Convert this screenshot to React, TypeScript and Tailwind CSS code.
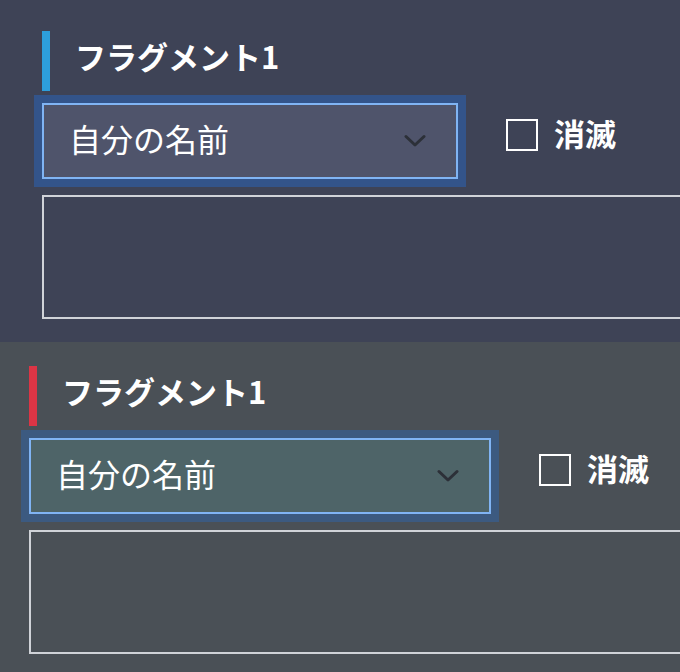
const FONT = { fontFamily: '"Noto Sans CJK JP", "Noto Sans", sans-serif' };

function Chevron() {
  return (
    <svg width="22" height="14" viewBox="0 0 22 14" fill="none">
      <path d="M2 2.5 L11 11 L20 2.5" stroke="#2c3038" strokeWidth="3" strokeLinecap="round" strokeLinejoin="round" />
    </svg>
  );
}

function Fragment({
  pad,
  selectWidth,
  sectionClass,
  barClass,
  ringClass,
  fieldClass,
}: {
  pad: string;
  selectWidth: string;
  sectionClass: string;
  barClass: string;
  ringClass: string;
  fieldClass: string;
}) {
  return (
    <section className={sectionClass}>
      <div className={pad}>
        <div className="flex items-start">
          <div className={`h-[60px] w-2 ${barClass}`} />
          <h2 className="ml-[25px] mt-[9px] text-[31px] font-bold leading-none text-white">フラグメント1</h2>
        </div>
        <div className="mt-1 flex items-start">
          <div className={`-ml-2 p-2 ${ringClass}`}>
            <div
              className={`flex h-[76px] items-center justify-between border-2 border-[#80b4f4] pl-[25px] pr-[30px] ${selectWidth} ${fieldClass}`}
            >
              <span className="mb-[6px] text-[32px] leading-none text-white">自分の名前</span>
              <Chevron />
            </div>
          </div>
          <label className="ml-10 mt-[22px] flex items-center gap-4">
            <span className="block h-8 w-8 border-2 border-white" />
            <span className="mb-1 text-[31px] font-bold leading-none text-white">消滅</span>
          </label>
        </div>
        <div className="mt-2 h-[124px] w-[720px] border-2 border-[#d0d3d8]" />
      </div>
    </section>
  );
}

export default function App() {
  return (
    <div className="h-[672px] w-[680px] overflow-hidden" style={FONT}>
      <Fragment
        pad="pl-[42px] pt-[31px] pb-[23px]"
        selectWidth="w-[416px]"
        sectionClass="bg-[#3e4356]"
        barClass="bg-[#2d9fdc]"
        ringClass="bg-[#33548a]"
        fieldClass="bg-[#4f546b]"
      />
      <Fragment
        pad="pl-[29px] pt-[24px] pb-[23px]"
        selectWidth="w-[462px]"
        sectionClass="bg-[#4a5056]"
        barClass="bg-[#dc3545]"
        ringClass="bg-[#3c5a80]"
        fieldClass="bg-[#4e6468]"
      />
    </div>
  );
}
